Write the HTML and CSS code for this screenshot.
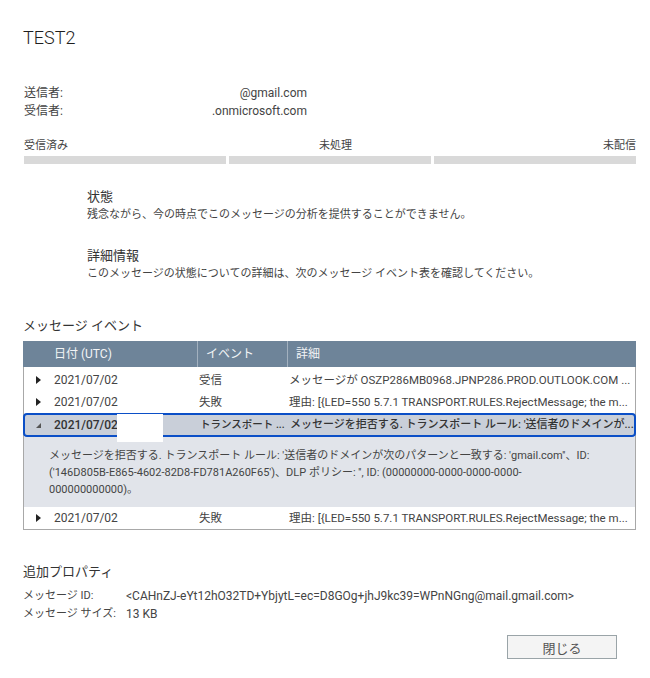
FILE: index.html
```html
<!DOCTYPE html>
<html lang="ja">
<head>
    <meta charset="UTF-8">
    <title>メッセージの詳細</title>
    <link rel="stylesheet" href="styles.css">
</head>
<body>

<div class="pagina">
    <h1 class="titulo">TEST2</h1>

    <div class="enderecos">
        <div class="endereco"><span>送信者:</span><span>@gmail.com</span></div>
        <div class="endereco"><span>受信者:</span><span>.onmicrosoft.com</span></div>
    </div>

    <div class="progresso">
        <div class="etapas">
            <span>受信済み</span>
            <span>未処理</span>
            <span>未配信</span>
        </div>
        <div class="barras">
            <div class="barra"></div>
            <div class="barra"></div>
            <div class="barra"></div>
        </div>
    </div>

    <div class="estado">
        <h2>状態</h2>
        <p>残念ながら、今の時点でこのメッセージの分析を提供することができません。</p>
        <h2>詳細情報</h2>
        <p>このメッセージの状態についての詳細は、次のメッセージ イベント表を確認してください。</p>
    </div>

    <h2 class="secao">メッセージ イベント</h2>

    <div class="tabela">
        <div class="cabecalho">
            <div class="col col-data">日付 (UTC)</div>
            <div class="col">イベント</div>
            <div class="col">詳細</div>
        </div>
        <div class="linhas">
            <div class="linha">
                <div class="col col-data"><span class="seta"></span>2021/07/02</div>
                <div class="col">受信</div>
                <div class="col">メッセージが OSZP286MB0968.JPNP286.PROD.OUTLOOK.COM ...</div>
            </div>
            <div class="linha">
                <div class="col col-data"><span class="seta"></span>2021/07/02</div>
                <div class="col">失敗</div>
                <div class="col">理由: [{LED=550 5.7.1 TRANSPORT.RULES.RejectMessage; the m...</div>
            </div>
            <div class="linha selecionada">
                <div class="col col-data"><span class="seta aberta"></span>2021/07/02</div>
                <div class="col col-evento">トランスポート ...</div>
                <div class="col col-info">メッセージを拒否する. トランスポート ルール: '送信者のドメインが...</div>
            </div>
            <div class="detalhe">
                <span>メッセージを拒否する. トランスポート ルール: '送信者のドメインが次のパターンと一致する: 'gmail.com''、ID:</span>
                <span>('146D805B-E865-4602-82D8-FD781A260F65')、DLP ポリシー: '', ID: (00000000-0000-0000-0000-</span>
                <span>000000000000)。</span>
            </div>
            <div class="linha">
                <div class="col col-data"><span class="seta"></span>2021/07/02</div>
                <div class="col">失敗</div>
                <div class="col">理由: [{LED=550 5.7.1 TRANSPORT.RULES.RejectMessage; the m...</div>
            </div>
        </div>
        <div class="tarja"></div>
    </div>

    <h2 class="secao propriedades">追加プロパティ</h2>
    <div class="props">
        <div class="prop"><span class="rotulo">メッセージ ID:</span><span>&lt;CAHnZJ-eYt12hO32TD+YbjytL=ec=D8GOg+jhJ9kc39=WPnNGng@mail.gmail.com&gt;</span></div>
        <div class="prop"><span class="rotulo">メッセージ サイズ:</span><span>13 KB</span></div>
    </div>

    <div class="acoes">
        <button class="fechar">閉じる</button>
    </div>
</div>

</body>
</html>
```

FILE: styles.css
```css
body {
    margin: 0;
    padding: 0;
    background-color: #fff;
    color: #444;
    font-family: 'Roboto', 'Noto Sans CJK JP', sans-serif;
    font-size: 12px;
}
.pagina {
    width: 613px;
    padding: 26px 14px 0 23px;
}
.titulo {
    margin: 0;
    font-size: 18px;
    font-weight: 300;
    line-height: 24px;
    color: #1e1e1e;
}
.enderecos {
    margin-top: 34px;
    width: 283px;
    padding-left: 1px;
}
.endereco {
    display: flex;
    justify-content: space-between;
    line-height: 18px;
}
.progresso {
    margin-top: 18px;
    padding-left: 1px;
}
.etapas {
    display: flex;
    justify-content: space-between;
    line-height: 16px;
    font-size: 11px;
}
.barras {
    display: flex;
    gap: 3px;
    margin-top: 2px;
}
.barra {
    flex: 1;
    height: 8px;
    background-color: #d9d9d9;
}
.estado {
    margin-top: 24px;
    padding-left: 64px;
}
.estado h2 {
    margin: 0;
    font-size: 13px;
    font-weight: 400;
    line-height: 18px;
    color: #333;
}
.estado p {
    margin: 0 0 24px 0;
    font-size: 11px;
    line-height: 17px;
}
.estado p:last-child {
    margin-bottom: 0;
}
.secao {
    margin: 35px 0 6px 0;
    font-size: 13px;
    font-weight: 400;
    line-height: 18px;
    color: #333;
}
.tabela {
    position: relative;
}
.cabecalho {
    display: grid;
    grid-template-columns: 174px 90px 1fr;
    height: 26px;
    background-color: #6e8499;
    color: #f2f4f6;
}
.cabecalho .col {
    line-height: 26px;
    padding-left: 8px;
    border-left: 1px solid #a3b1bf;
}
.cabecalho .col-data {
    padding-left: 31px;
    border-left: none;
}
.linhas {
    border: 1px solid #a8a8a8;
    border-top: none;
    padding-top: 2px;
}
.linha {
    display: grid;
    grid-template-columns: 173px 90px 1fr;
    height: 22px;
    line-height: 22px;
    font-size: 11.5px;
}
.linha .col {
    padding-left: 2px;
    white-space: nowrap;
    overflow: hidden;
}
.linha .col-data {
    display: flex;
    align-items: center;
    padding-left: 12px;
    font-size: 12px;
}
.seta {
    width: 0;
    height: 0;
    border-top: 4px solid transparent;
    border-bottom: 4px solid transparent;
    border-left: 5px solid #222;
    margin-right: 13px;
}
.seta.aberta {
    border-top: none;
    border-left: 5px solid transparent;
    border-bottom: 5px solid #555;
}
.selecionada {
    height: 20px;
    line-height: 20px;
    background-color: #c9cfd9;
    border: 2px solid #0b4fc7;
    border-radius: 4px;
    margin: 0 -1px;
    font-weight: 500;
    color: #333;
}
.selecionada .col-data {
    padding-left: 11px;
}
.selecionada .col-evento {
    font-size: 10.5px;
}
.selecionada .col-info {
    font-size: 11px;
}
.detalhe {
    background-color: #e1e4ea;
    padding: 10px 8px 9px 25px;
    font-size: 11px;
    line-height: 17px;
}
.detalhe span {
    display: block;
    white-space: nowrap;
}
.tarja {
    position: absolute;
    left: 94px;
    top: 73px;
    width: 46px;
    height: 28px;
    background-color: #fff;
}
.propriedades {
    margin-top: 33px;
}
.props .prop {
    display: flex;
    line-height: 18px;
}
.rotulo {
    min-width: 103px;
    font-size: 11px;
}
.acoes {
    display: flex;
    justify-content: flex-end;
    margin-top: 12px;
    padding-right: 19px;
}
.fechar {
    width: 110px;
    height: 24px;
    background-color: #f4f4f4;
    border: 1px solid #9aa4a8;
    color: #555;
    font-family: 'Roboto', 'Noto Sans CJK JP', sans-serif;
    font-size: 13px;
    cursor: pointer;
}
```
